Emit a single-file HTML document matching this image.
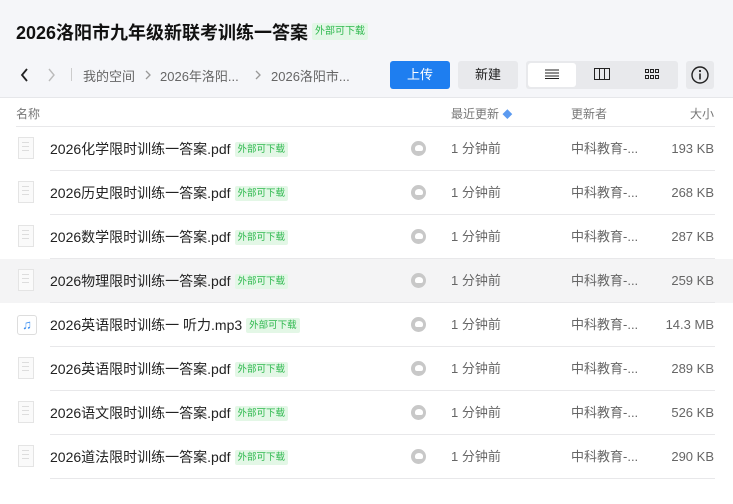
<!DOCTYPE html>
<html><head><meta charset="utf-8"><style>
*{margin:0;padding:0;box-sizing:border-box}
body{width:733px;height:504px;overflow:hidden;background:#fff;font-family:"Liberation Sans","Noto Sans CJK SC",sans-serif;color:#222;position:relative}
.top{position:absolute;left:0;top:0;width:733px;height:98px;background:#f5f6f9;border-bottom:1px solid #e6e7ea}
.title{position:absolute;left:16px;top:19px;font-size:18px;font-weight:bold;color:#111}
.tag{display:inline-block;background:#e3f7e6;color:#2db84d;font-size:9.5px;padding:0 3px;border-radius:2px;font-weight:normal;vertical-align:middle;line-height:15px}
.title .tag{font-size:10px;padding:1px 3px;margin-left:4px;position:relative;top:-3px}
.abs{position:absolute}
.crumb{font-size:13px;color:#666;top:66px}
.btn{position:absolute;top:61px;height:28px;border-radius:3px;font-size:13px;text-align:center;line-height:28px}
.hdr{position:absolute;top:105px;font-size:12px;color:#777}
.row{position:absolute;left:0;width:733px;height:44px;line-height:44px}
.row .line{position:absolute;left:50px;right:18px;bottom:0;height:1px;background:#e8e8ea}
.row .name{position:absolute;left:50px;top:0;font-size:14px;color:#222}
.row .name .tag{margin-left:4px;position:relative;top:-1px}
.row .cloud{position:absolute;left:411px;top:14px;width:15px;height:15px;border-radius:50%;background:#c8c8c8}
.row .cloud:after{content:"";position:absolute;left:3.5px;top:4px;width:8px;height:6px;background:#fff;border-radius:50% 50% 2px 2px}
.row .t,.row .u,.row .s{position:absolute;top:0;font-size:13px;color:#666}
.row .t{left:451px}.row .u{left:571px}.row .s{right:19px}
.doc{position:absolute;left:18px;top:10px;width:16px;height:22px;background:#fafafa;border:1px solid #e4e4e4}
.doc i{position:absolute;left:3px;right:4px;height:1px;background:#ddd}
.mp3{position:absolute;left:17px;top:12px;width:20px;height:20px;border:1px solid #ddd;border-radius:3px;background:#fff;color:#3b8ef0;font-size:13px;text-align:center;line-height:18px}
</style></head><body>
<div class="top">
 <div class="title">2026洛阳市九年级新联考训练一答案<span class="tag">外部可下载</span></div>
 <svg class="abs" style="left:20px;top:68px" width="10" height="14"><path d="M7 1L2 7l5 6" stroke="#222" stroke-width="1.8" fill="none"/></svg>
 <svg class="abs" style="left:46px;top:68px" width="10" height="14"><path d="M3 1l5 6-5 6" stroke="#bbb" stroke-width="1.4" fill="none"/></svg>
 <div class="abs" style="left:71px;top:68px;width:1px;height:13px;background:#ccc"></div>
 <div class="abs crumb" style="left:83px">我的空间</div>
 <svg class="abs" style="left:144px;top:69px" width="8" height="12"><path d="M2 2l4 4-4 4" stroke="#999" stroke-width="1.3" fill="none"/></svg>
 <div class="abs crumb" style="left:160px">2026年洛阳...</div>
 <svg class="abs" style="left:254px;top:69px" width="8" height="12"><path d="M2 2l4 4-4 4" stroke="#999" stroke-width="1.3" fill="none"/></svg>
 <div class="abs crumb" style="left:271px">2026洛阳市...</div>
 <div class="btn" style="left:390px;width:60px;background:#1e7ef0;color:#fff">上传</div>
 <div class="btn" style="left:458px;width:60px;background:#e8e9ec;color:#222">新建</div>
 <div class="btn" style="left:526px;width:152px;background:#e8e9ec"></div>
 <div class="btn" style="left:528px;top:63px;height:24px;width:48px;background:#fff"></div>
 <svg class="abs" style="left:545px;top:69px" width="14" height="10"><path d="M0 1h14M0 4h14M0 7h14M0 9.5h14" stroke="#222" stroke-width="1"/></svg>
 <svg class="abs" style="left:594px;top:68px" width="16" height="12"><rect x="0.5" y="0.5" width="15" height="11" fill="none" stroke="#222"/><path d="M5.5 0v12M10.5 0v12" stroke="#222"/></svg>
 <svg class="abs" style="left:645px;top:69px" width="14" height="10"><g fill="none" stroke="#222"><rect x=".5" y=".5" width="3" height="3"/><rect x="5.5" y=".5" width="3" height="3"/><rect x="10.5" y=".5" width="3" height="3"/><rect x=".5" y="6.5" width="3" height="3"/><rect x="5.5" y="6.5" width="3" height="3"/><rect x="10.5" y="6.5" width="3" height="3"/></g></svg>
 <div class="btn" style="left:686px;width:28px;background:#e8e9ec"></div>
 <svg class="abs" style="left:690px;top:65px" width="20" height="20"><circle cx="10" cy="10" r="8" fill="none" stroke="#222" stroke-width="1.4"/><circle cx="10" cy="6" r="1.1" fill="#222"/><path d="M10 8.5v6" stroke="#222" stroke-width="1.6"/></svg>
</div>
<div class="hdr" style="left:16px">名称</div>
<div class="hdr" style="left:451px">最近更新 <span style="color:#5b9af0;font-size:10px">◆</span></div>
<div class="hdr" style="left:571px">更新者</div>
<div class="hdr" style="right:19px">大小</div>
<div class="abs" style="left:16px;right:18px;top:126px;height:1px;background:#e8e8ea"></div>

<div class="row" style="top:127px"><div class="doc"><i style="top:4px"></i><i style="top:8px"></i><i style="top:12px"></i></div><div class="name">2026化学限时训练一答案.pdf<span class="tag">外部可下载</span></div><div class="cloud"></div><div class="t">1 分钟前</div><div class="u">中科教育-...</div><div class="s">193 KB</div><div class="line"></div></div>
<div class="row" style="top:171px"><div class="doc"><i style="top:4px"></i><i style="top:8px"></i><i style="top:12px"></i></div><div class="name">2026历史限时训练一答案.pdf<span class="tag">外部可下载</span></div><div class="cloud"></div><div class="t">1 分钟前</div><div class="u">中科教育-...</div><div class="s">268 KB</div><div class="line"></div></div>
<div class="row" style="top:215px"><div class="doc"><i style="top:4px"></i><i style="top:8px"></i><i style="top:12px"></i></div><div class="name">2026数学限时训练一答案.pdf<span class="tag">外部可下载</span></div><div class="cloud"></div><div class="t">1 分钟前</div><div class="u">中科教育-...</div><div class="s">287 KB</div><div class="line"></div></div>
<div class="row" style="top:259px;background:#f4f4f5"><div class="doc"><i style="top:4px"></i><i style="top:8px"></i><i style="top:12px"></i></div><div class="name">2026物理限时训练一答案.pdf<span class="tag">外部可下载</span></div><div class="cloud"></div><div class="t">1 分钟前</div><div class="u">中科教育-...</div><div class="s">259 KB</div><div class="line"></div></div>
<div class="row" style="top:303px"><div class="mp3">♫</div><div class="name">2026英语限时训练一 听力.mp3<span class="tag">外部可下载</span></div><div class="cloud"></div><div class="t">1 分钟前</div><div class="u">中科教育-...</div><div class="s">14.3 MB</div><div class="line"></div></div>
<div class="row" style="top:347px"><div class="doc"><i style="top:4px"></i><i style="top:8px"></i><i style="top:12px"></i></div><div class="name">2026英语限时训练一答案.pdf<span class="tag">外部可下载</span></div><div class="cloud"></div><div class="t">1 分钟前</div><div class="u">中科教育-...</div><div class="s">289 KB</div><div class="line"></div></div>
<div class="row" style="top:391px"><div class="doc"><i style="top:4px"></i><i style="top:8px"></i><i style="top:12px"></i></div><div class="name">2026语文限时训练一答案.pdf<span class="tag">外部可下载</span></div><div class="cloud"></div><div class="t">1 分钟前</div><div class="u">中科教育-...</div><div class="s">526 KB</div><div class="line"></div></div>
<div class="row" style="top:435px"><div class="doc"><i style="top:4px"></i><i style="top:8px"></i><i style="top:12px"></i></div><div class="name">2026道法限时训练一答案.pdf<span class="tag">外部可下载</span></div><div class="cloud"></div><div class="t">1 分钟前</div><div class="u">中科教育-...</div><div class="s">290 KB</div><div class="line"></div></div>
</body></html>
